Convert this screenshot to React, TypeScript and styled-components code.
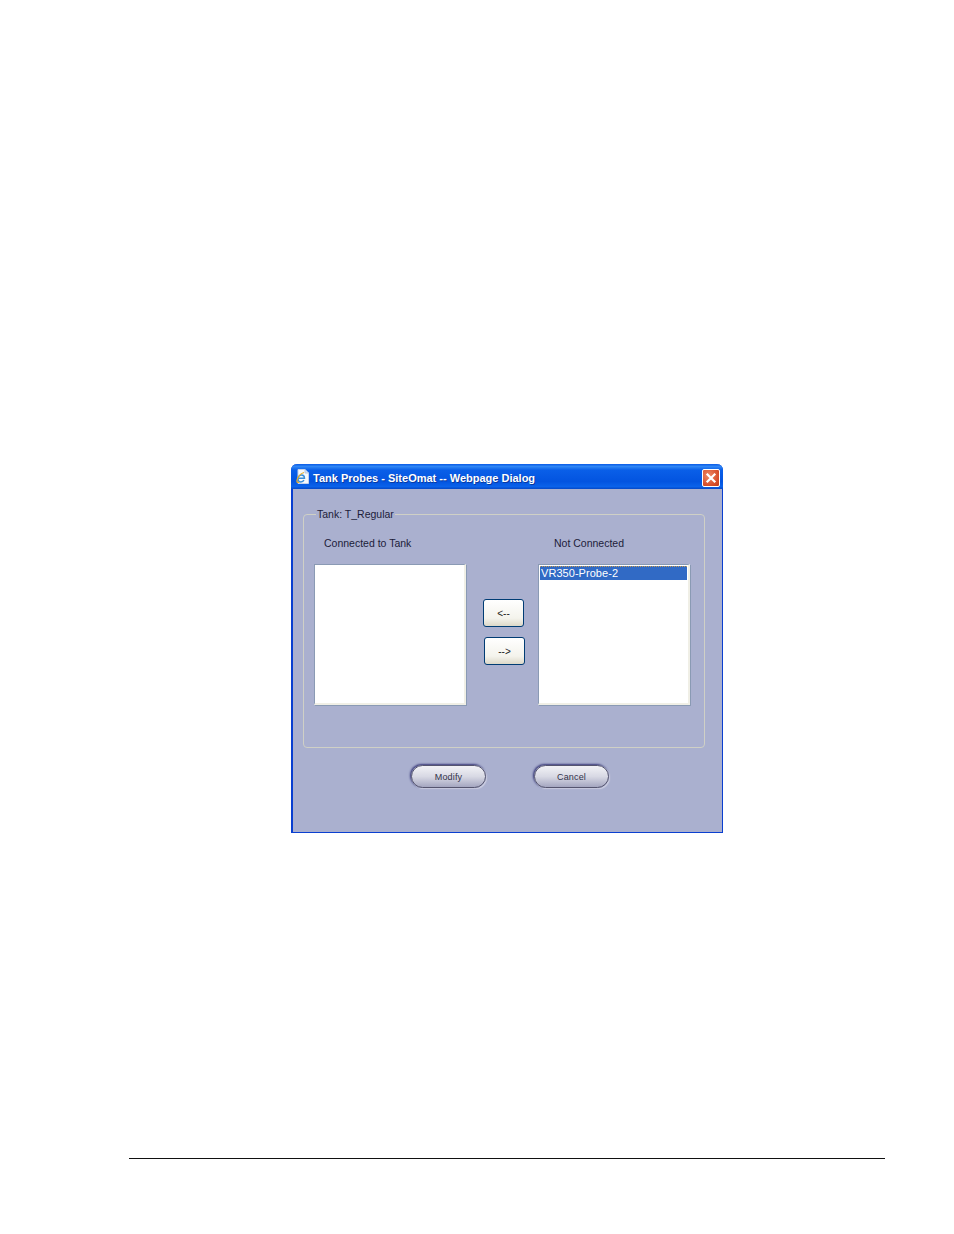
import React from 'react';
import styled, { createGlobalStyle } from 'styled-components';

const GlobalStyle = createGlobalStyle`
  html, body {
    margin: 0;
    background: #fff;
    font-family: "Liberation Sans", Arial, sans-serif;
  }
`;

const Page = styled.div`
  width: 954px;
  height: 1234px;
  padding: 464px 0 0 291px;
  box-sizing: border-box;
  display: flex;
  flex-direction: column;
`;

const Dialog = styled.div`
  width: 432px;
  height: 369px;
  box-sizing: border-box;
  background: #aab0cf;
  border: solid #0a3fd0;
  border-width: 0 1px 1px 2px;
  border-radius: 6px 6px 0 0;
  display: flex;
  flex-direction: column;
`;

const TitleBar = styled.div`
  height: 25px;
  margin: 0 -1px 0 -2px;
  padding: 0 2px 0 5px;
  flex: none;
  display: flex;
  align-items: center;
  border-radius: 6px 6px 0 0;
  background: linear-gradient(#0a5be6 0%, #2f86f5 10%, #0a5fe8 24%, #0354e0 70%, #0a62ea 90%, #0548c8 100%);
`;

const TitleText = styled.span`
  margin: 2px 0 0 4px;
  flex: 1;
  color: #fff;
  font-size: 11px;
  font-weight: bold;
  white-space: nowrap;
  text-shadow: 1px 1px 0 #0a3aa0;
`;

const CloseBox = styled.div`
  width: 18px;
  height: 18px;
  margin: 2px 1px 0 0;
  box-sizing: border-box;
  display: flex;
  align-items: center;
  justify-content: center;
  border: 1px solid #fff;
  border-radius: 2px;
  background: radial-gradient(circle at 35% 35%, #ee8a66, #d8502c 65%, #c23c18);
`;

const GroupBox = styled.fieldset`
  margin: 19px 17px 0 10px;
  padding: 0 10px;
  height: 240px;
  box-sizing: border-box;
  border: 1px solid #cfd0c6;
  border-radius: 4px;
  display: grid;
  grid-template-columns: 153px 71px 153px;
  grid-template-rows: 44px 141px;
  align-content: start;
`;

const Legend = styled.legend`
  margin-left: 2px;
  padding: 0 1px;
  font-size: 10.5px;
  line-height: 12px;
  color: #1c1c3a;
`;

const ColumnLabel = styled.div<{ $indent: number }>`
  padding: 17px 0 0 ${p => p.$indent}px;
  font-size: 10.5px;
  line-height: 12px;
  color: #1c1c3a;
  white-space: nowrap;
`;

const ListBox = styled.div`
  grid-row: 2;
  margin-right: 1px;
  box-sizing: border-box;
  padding: 1px;
  background: #fff;
  border: solid;
  border-width: 1px 2px 2px 1px;
  border-color: #8a9ab4 #f0efe6 #f0efe6 #8a9ab4;
  box-shadow: 1px 1px 0 #8a9ab4;
`;

const ListItem = styled.div`
  height: 14px;
  padding-left: 1px;
  background: #316ac5;
  border-top: 1px dotted #c89a50;
  box-sizing: border-box;
  color: #fff;
  font-size: 11px;
  line-height: 13px;
  letter-spacing: 0.05px;
  white-space: nowrap;
`;

const ArrowColumn = styled.div`
  grid-row: 2;
  padding: 35px 0 0 16px;
  display: flex;
  flex-direction: column;
  gap: 10px;
`;

const ArrowButton = styled.button<{ $shift?: number }>`
  width: 41px;
  height: 28px;
  margin: 0 0 0 ${p => p.$shift ?? 0}px;
  padding: 0;
  border: 1px solid #003c74;
  border-radius: 3px;
  background: linear-gradient(#fff, #f4f3ec 70%, #dcd8c8);
  font-family: "Liberation Sans", Arial, sans-serif;
  font-size: 10px;
  color: #222;
`;

const ActionRow = styled.div`
  margin: 17px 0 0 118px;
  display: flex;
  gap: 48px;
`;

const PillButton = styled.button`
  width: 75px;
  height: 23px;
  padding: 0;
  border: 1px solid #55556f;
  border-radius: 12px;
  background: linear-gradient(#f2f2f6, #d8d9e4 50%, #a4a6c0);
  box-shadow: -1px -1px 2px #3a3a7a, 1px 1px 1px #d0d2e4;
  font-family: "Liberation Sans", Arial, sans-serif;
  font-size: 9px;
  letter-spacing: 0.15px;
  color: #33334a;
`;

const FooterRule = styled.hr`
  width: 756px;
  height: 1px;
  margin: 325px 0 0 -162px;
  border: 0;
  background: #111;
`;

const IeIcon = () => (
  <svg width="13" height="15" viewBox="0 0 13 15">
    <path d="M2 .5h7l3.500 3.500V14.500H2z" fill="#f7f9fd" stroke="#c4d2ea" strokeWidth="1" />
    <path d="M9 .5v3.500h3.500" fill="#d4dff0" stroke="#b8c8e4" strokeWidth="1" />
    <path d="M2.800 9.200h5.700c0-2-1.200-3.200-2.900-3.200-2 0-3.600 1.900-3.600 4 0 2 1.300 3 2.900 3 1.400 0 2.500-.7 3.100-1.800" fill="none" stroke="#3c8fd8" strokeWidth="1.400" />
    <path d="M8 3.500C4.500 4.500 1.200 8 .8 12c-.1 1.500 1 1.800 2.400 1" fill="none" stroke="#e8ac24" strokeWidth="1.100" />
  </svg>
);

const CloseIcon = () => (
  <svg width="12" height="12" viewBox="0 0 12 12">
    <path d="M2.500 2.500l7 7M9.500 2.500l-7 7" stroke="#fff" strokeWidth="2.200" strokeLinecap="square" />
  </svg>
);

export default function App() {
  return (
    <Page>
      <GlobalStyle />
      <Dialog>
        <TitleBar>
          <IeIcon />
          <TitleText>Tank Probes - SiteOmat -- Webpage Dialog</TitleText>
          <CloseBox>
            <CloseIcon />
          </CloseBox>
        </TitleBar>
        <GroupBox>
          <Legend>Tank: T_Regular</Legend>
          <ColumnLabel $indent={10}>Connected to Tank</ColumnLabel>
          <div />
          <ColumnLabel $indent={16}>Not Connected</ColumnLabel>
          <ListBox />
          <ArrowColumn>
            <ArrowButton>&lt;--</ArrowButton>
            <ArrowButton $shift={1}>--&gt;</ArrowButton>
          </ArrowColumn>
          <ListBox>
            <ListItem>VR350-Probe-2</ListItem>
          </ListBox>
        </GroupBox>
        <ActionRow>
          <PillButton>Modify</PillButton>
          <PillButton>Cancel</PillButton>
        </ActionRow>
      </Dialog>
      <FooterRule />
    </Page>
  );
}
